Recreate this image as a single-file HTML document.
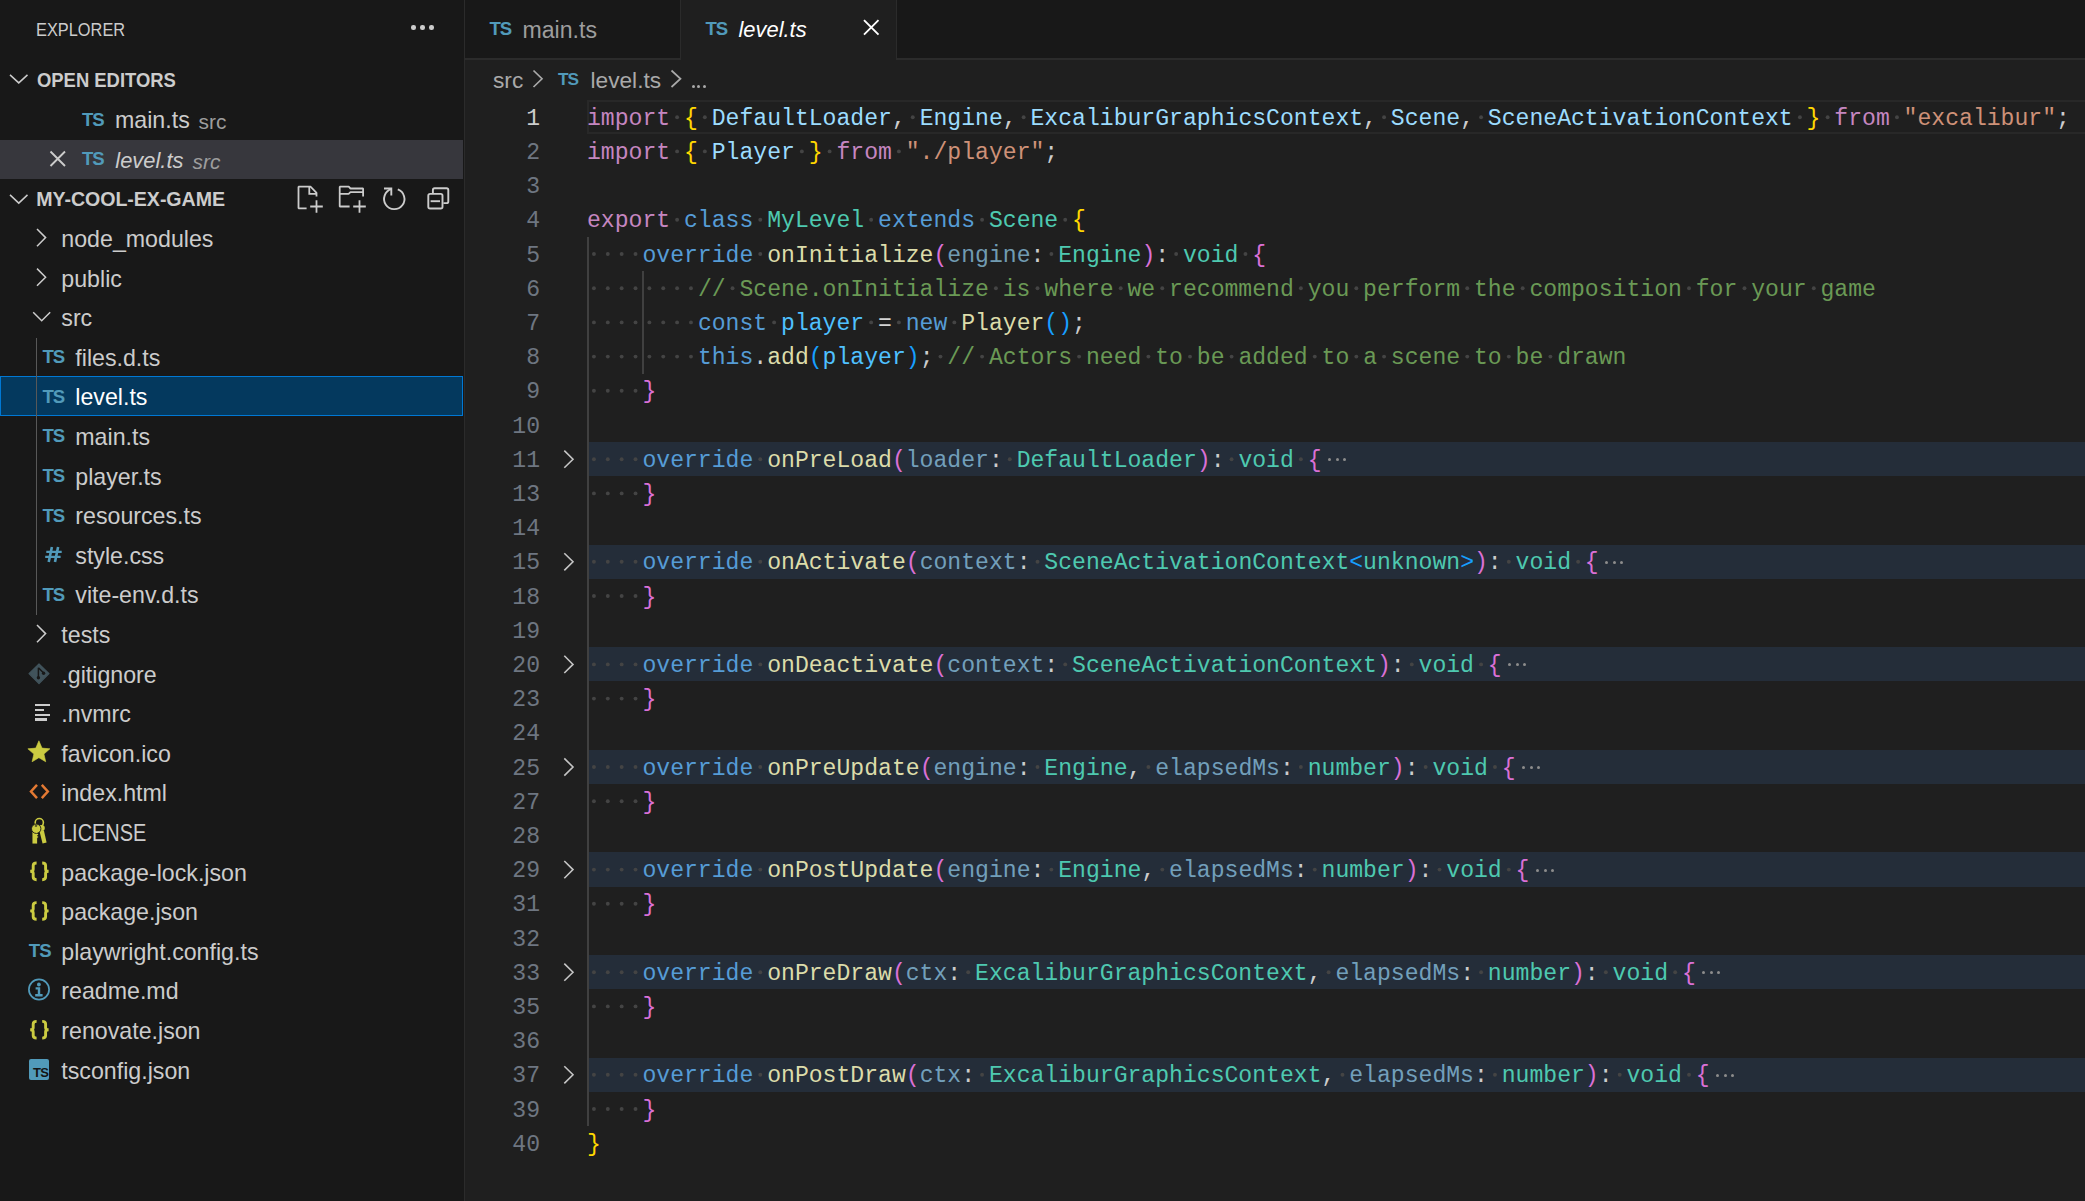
<!DOCTYPE html><html><head><meta charset="utf-8"><style>
html,body{margin:0;padding:0;width:2085px;height:1201px;overflow:hidden;background:#1f1f1f;}
.t{position:absolute;white-space:pre;}
.a{position:absolute;}
svg{position:absolute;overflow:visible;}
.cl{position:absolute;left:587px;height:34.2px;line-height:34.2px;font-family:"Liberation Mono",monospace;font-size:23.1px;white-space:pre;}
.w{color:transparent;}
</style></head><body>
<div class="a" style="left:0;top:0;width:464px;height:1201px;background:#181818;"></div>
<div class="a" style="left:464px;top:0;width:1px;height:1201px;background:#2b2b2b;"></div>
<div class="t" style="left:36.20px;top:17.86px;font:normal normal 19.2px 'Liberation Sans', sans-serif;line-height:24.96px;color:#CCCCCC;transform:scaleX(0.853);transform-origin:0 0;">EXPLORER</div>
<div class="a" style="left:411.25px;top:25.25px;width:4.5px;height:4.5px;border-radius:50%;background:#CCCCCC;"></div>
<div class="a" style="left:420.35px;top:25.25px;width:4.5px;height:4.5px;border-radius:50%;background:#CCCCCC;"></div>
<div class="a" style="left:429.35px;top:25.25px;width:4.5px;height:4.5px;border-radius:50%;background:#CCCCCC;"></div>
<svg style="left:0;top:0" width="1" height="1"><polyline points="10,74.9 18.75,82.9 27.5,74.9" fill="none" stroke="#CCCCCC" stroke-width="1.5"/></svg>
<div class="t" style="left:36.60px;top:68.06px;font:normal bold 19.6px 'Liberation Sans', sans-serif;line-height:25.48px;color:#CCCCCC;transform:scaleX(0.94);transform-origin:0 0;">OPEN EDITORS</div>
<div class="a" style="left:0;top:139.9px;width:463px;height:39.6px;background:#37373D;"></div>
<div class="t" style="left:82.00px;top:107.56px;font:normal bold 18.6px 'Liberation Sans', sans-serif;line-height:24.18px;color:#519ABA;letter-spacing:-1.0px;">TS</div>
<div class="t" style="left:115.00px;top:105.38px;font:normal normal 23.2px 'Liberation Sans', sans-serif;line-height:30.16px;color:#CCCCCC;">main.ts</div>
<div class="t" style="left:198.50px;top:107.67px;font:normal normal 20.9px 'Liberation Sans', sans-serif;line-height:27.17px;color:#9D9D9D;">src</div>
<svg style="left:0;top:0" width="1" height="1"><path d="M50.5 151.5 L65 166 M65 151.5 L50.5 166" stroke="#CCCCCC" stroke-width="1.9" fill="none"/></svg>
<div class="t" style="left:82.00px;top:147.16px;font:normal bold 18.6px 'Liberation Sans', sans-serif;line-height:24.18px;color:#519ABA;letter-spacing:-1.0px;">TS</div>
<div class="t" style="left:115.30px;top:147.07px;font:italic normal 21.9px 'Liberation Sans', sans-serif;line-height:28.47px;color:#CCCCCC;">level.ts</div>
<div class="t" style="left:192.50px;top:148.07px;font:italic normal 20.9px 'Liberation Sans', sans-serif;line-height:27.17px;color:#9D9D9D;">src</div>
<svg style="left:0;top:0" width="1" height="1"><polyline points="10,194.9 18.75,203.1 27.5,194.9" fill="none" stroke="#CCCCCC" stroke-width="1.5"/></svg>
<div class="t" style="left:36.20px;top:186.66px;font:normal bold 19.6px 'Liberation Sans', sans-serif;line-height:25.48px;color:#CCCCCC;letter-spacing:-0.04px;">MY-COOL-EX-GAME</div>
<svg style="left:294.1px;top:183.9px" width="28.8" height="28.8" viewBox="0 0 16 16"><path d="M9.5 1.1l3.4 3.5.1.4v2h-1V6H8V2H3v11h4v1H2.5l-.5-.5v-12l.5-.5h6.7l.3.1zM9 2v3h2.9L9 2zm4 14h-1v-3H9v-1h3V9h1v3h3v1h-3v3z" fill="#CCCCCC" fill-rule="evenodd"/></svg>
<svg style="left:336.8px;top:183.9px" width="28.8" height="28.8" viewBox="0 0 16 16"><path d="M14.5 2H7.71l-.85-.85L6.51 1h-5l-.5.5v11l.5.5H7v-1H1.99V6h4.49l.35-.15.86-.86H14v1.5l-.001.51h1.011V2.5L14.5 2zm-.51 2h-6.5l-.35.15-.86.86H2v-3h4.29l.85.85.36.15H14l-.01.99zM13 16h-1v-3H9v-1h3V9h1v3h3v1h-3v3z" fill="#CCCCCC" fill-rule="evenodd"/></svg>
<svg style="left:0;top:0" width="1" height="1"><path d="M391.3 189.2 A10.2 10.2 0 1 0 397.8 189.4" fill="none" stroke="#CCCCCC" stroke-width="1.9"/><path d="M384 188.5 L391.3 188.5 L391.3 195.5" fill="none" stroke="#CCCCCC" stroke-width="1.9"/></svg>
<svg style="left:0;top:0" width="1" height="1"><path d="M432.9 193 V190 Q432.9 188.3 434.6 188.3 H446.6 Q448.3 188.3 448.3 190 V201.4 Q448.3 203.1 446.6 203.1 H443.4" fill="none" stroke="#CCCCCC" stroke-width="1.9"/><rect x="428.3" y="193.9" width="14.2" height="14.6" rx="1.8" fill="none" stroke="#CCCCCC" stroke-width="1.9"/><path d="M430.6 201.2 H440" stroke="#CCCCCC" stroke-width="1.9"/></svg>
<div class="a" style="left:0;top:375.90px;width:463px;height:39.80px;background:#04395E;box-sizing:border-box;border:1.3px solid #0078D4;"></div>
<div class="a" style="left:36px;top:337.60px;width:1.1px;height:277.20px;background:#585858;"></div>
<svg style="left:0;top:0" width="1" height="1"><polyline points="37,229.00000000000003 45.6,237.60000000000002 37,246.20000000000002" fill="none" stroke="#CCCCCC" stroke-width="1.5"/></svg>
<div class="t" style="left:61.30px;top:223.93px;font:normal normal 23.2px 'Liberation Sans', sans-serif;line-height:30.16px;color:#CCCCCC;">node_modules</div>
<svg style="left:0;top:0" width="1" height="1"><polyline points="37,268.6 45.6,277.20000000000005 37,285.80000000000007" fill="none" stroke="#CCCCCC" stroke-width="1.5"/></svg>
<div class="t" style="left:61.30px;top:263.53px;font:normal normal 23.2px 'Liberation Sans', sans-serif;line-height:30.16px;color:#CCCCCC;">public</div>
<svg style="left:0;top:0" width="1" height="1"><polyline points="33.2,312.2 41.7,320.7 50.2,312.2" fill="none" stroke="#CCCCCC" stroke-width="1.5"/></svg>
<div class="t" style="left:61.30px;top:303.13px;font:normal normal 23.2px 'Liberation Sans', sans-serif;line-height:30.16px;color:#CCCCCC;">src</div>
<svg style="left:0;top:0" width="1" height="1"><polyline points="37,624.9999999999999 45.6,633.5999999999999 37,642.1999999999999" fill="none" stroke="#CCCCCC" stroke-width="1.5"/></svg>
<div class="t" style="left:61.30px;top:619.93px;font:normal normal 23.2px 'Liberation Sans', sans-serif;line-height:30.16px;color:#CCCCCC;">tests</div>
<div class="t" style="left:42.50px;top:345.26px;font:normal bold 18.6px 'Liberation Sans', sans-serif;line-height:24.18px;color:#519ABA;letter-spacing:-1.0px;">TS</div>
<div class="t" style="left:75.30px;top:342.73px;font:normal normal 23.2px 'Liberation Sans', sans-serif;line-height:30.16px;color:#CCCCCC;">files.d.ts</div>
<div class="t" style="left:42.50px;top:384.86px;font:normal bold 18.6px 'Liberation Sans', sans-serif;line-height:24.18px;color:#519ABA;letter-spacing:-1.0px;">TS</div>
<div class="t" style="left:75.30px;top:382.33px;font:normal normal 23.2px 'Liberation Sans', sans-serif;line-height:30.16px;color:#FFFFFF;">level.ts</div>
<div class="t" style="left:42.50px;top:424.46px;font:normal bold 18.6px 'Liberation Sans', sans-serif;line-height:24.18px;color:#519ABA;letter-spacing:-1.0px;">TS</div>
<div class="t" style="left:75.30px;top:421.93px;font:normal normal 23.2px 'Liberation Sans', sans-serif;line-height:30.16px;color:#CCCCCC;">main.ts</div>
<div class="t" style="left:42.50px;top:464.06px;font:normal bold 18.6px 'Liberation Sans', sans-serif;line-height:24.18px;color:#519ABA;letter-spacing:-1.0px;">TS</div>
<div class="t" style="left:75.30px;top:461.53px;font:normal normal 23.2px 'Liberation Sans', sans-serif;line-height:30.16px;color:#CCCCCC;">player.ts</div>
<div class="t" style="left:42.50px;top:503.66px;font:normal bold 18.6px 'Liberation Sans', sans-serif;line-height:24.18px;color:#519ABA;letter-spacing:-1.0px;">TS</div>
<div class="t" style="left:75.30px;top:501.13px;font:normal normal 23.2px 'Liberation Sans', sans-serif;line-height:30.16px;color:#CCCCCC;">resources.ts</div>
<svg style="left:0;top:0" width="1" height="1"><path d="M51.9 546.9 L48.7 562.1 M58.1 546.9 L55 562.1" stroke="#519ABA" stroke-width="2.6" fill="none"/><path d="M46.3 551.9 H61.7 M45.2 556.9 H60.6" stroke="#519ABA" stroke-width="2.1" fill="none"/></svg>
<div class="t" style="left:75.30px;top:540.73px;font:normal normal 23.2px 'Liberation Sans', sans-serif;line-height:30.16px;color:#CCCCCC;">style.css</div>
<div class="t" style="left:42.50px;top:582.86px;font:normal bold 18.6px 'Liberation Sans', sans-serif;line-height:24.18px;color:#519ABA;letter-spacing:-1.0px;">TS</div>
<div class="t" style="left:75.30px;top:580.33px;font:normal normal 23.2px 'Liberation Sans', sans-serif;line-height:30.16px;color:#CCCCCC;">vite-env.d.ts</div>
<div class="t" style="left:61.30px;top:659.53px;font:normal normal 23.2px 'Liberation Sans', sans-serif;line-height:30.16px;color:#CCCCCC;">.gitignore</div>
<svg style="left:0;top:0" width="1" height="1"><path d="M39 664.0 L49 673.6 L39 683.6 L29 673.6 Z" fill="#41535B" stroke="#41535B" stroke-width="1.2" stroke-linejoin="round"/><path d="M38.4 667.7 L38.4 677.8000000000001 M38.4 667.7 L43.6 673.0" stroke="#181818" stroke-width="1.5" fill="none"/><circle cx="38.4" cy="677.8000000000001" r="1.7" fill="#181818"/><circle cx="43.6" cy="673.2" r="1.7" fill="#181818"/></svg>
<div class="t" style="left:61.30px;top:699.13px;font:normal normal 23.2px 'Liberation Sans', sans-serif;line-height:30.16px;color:#CCCCCC;">.nvmrc</div>
<div class="a" style="left:35px;top:704.20px;width:14.9px;height:2.3px;background:#CCCCCC;"></div>
<div class="a" style="left:35px;top:708.90px;width:8.6px;height:2.3px;background:#CCCCCC;"></div>
<div class="a" style="left:35px;top:713.60px;width:14.9px;height:2.3px;background:#CCCCCC;"></div>
<div class="a" style="left:35px;top:718.30px;width:11.5px;height:2.3px;background:#CCCCCC;"></div>
<div class="t" style="left:61.30px;top:738.73px;font:normal normal 23.2px 'Liberation Sans', sans-serif;line-height:30.16px;color:#CCCCCC;">favicon.ico</div>
<svg style="left:0;top:0" width="1" height="1"><polygon points="38.90,740.80 42.02,748.11 49.93,748.82 43.94,754.04 45.72,761.78 38.90,757.70 32.08,761.78 33.86,754.04 27.87,748.82 35.78,748.11" fill="#CBCB41" stroke="#CBCB41" stroke-width="0.6" stroke-linejoin="round"/></svg>
<div class="t" style="left:61.30px;top:778.33px;font:normal normal 23.2px 'Liberation Sans', sans-serif;line-height:30.16px;color:#CCCCCC;">index.html</div>
<svg style="left:0;top:0" width="1" height="1"><path d="M37 784.8 L31 791.5 L37 798.2 M41.8 784.8 L47.8 791.5 L41.8 798.2" stroke="#E37933" stroke-width="2.5" fill="none"/></svg>
<div class="t" style="left:61.30px;top:817.93px;font:normal normal 23.2px 'Liberation Sans', sans-serif;line-height:30.16px;color:#CCCCCC;transform:scaleX(0.86);transform-origin:0 0;">LICENSE</div>
<svg style="left:0;top:0" width="1" height="1"><circle cx="39.3" cy="822.5999999999999" r="4.1" stroke="#CBCB41" stroke-width="1.6" fill="none"/><path d="M39.3 830.5999999999999 L43.9 830.5999999999999 L46.6 842.3999999999999 L42.6 843.4999999999999 Z" fill="#CBCB41"/><circle cx="41.8" cy="827.9999999999999" r="3" fill="#CBCB41"/><g stroke="#181818" stroke-width="0.9"><path d="M32 829.0999999999999 L37.6 829.0999999999999 L37.6 833.5999999999999 L38.6 834.5999999999999 L37.6 835.5999999999999 L38.6 837.0999999999999 L37.6 838.0999999999999 L37.6 843.9999999999999 L32 843.9999999999999 Z" fill="#CBCB41"/><circle cx="36.2" cy="828.6999999999999" r="4.7" fill="#CBCB41"/></g><path d="M32.5 829.3999999999999 H37.2 V833.5999999999999" fill="#CBCB41"/><circle cx="36" cy="825.6999999999999" r="1.3" fill="#181818" opacity="0.6"/></svg>
<div class="t" style="left:61.30px;top:857.53px;font:normal normal 23.2px 'Liberation Sans', sans-serif;line-height:30.16px;color:#CCCCCC;">package-lock.json</div>
<svg style="left:0;top:0" width="1" height="1"><path d="M36.6 863.0 Q33.2 863.0 33.2 865.6 V869.3000000000001 Q33.2 871.3000000000001 30.2 871.3000000000001 Q33.2 871.3000000000001 33.2 873.3000000000001 V877.1 Q33.2 879.7 36.6 879.7" stroke="#CBCB41" stroke-width="2.9" fill="none"/><path d="M42.2 863.0 Q45.6 863.0 45.6 865.6 V869.3000000000001 Q45.6 871.3000000000001 48.6 871.3000000000001 Q45.6 871.3000000000001 45.6 873.3000000000001 V877.1 Q45.6 879.7 42.2 879.7" stroke="#CBCB41" stroke-width="2.9" fill="none"/></svg>
<div class="t" style="left:61.30px;top:897.13px;font:normal normal 23.2px 'Liberation Sans', sans-serif;line-height:30.16px;color:#CCCCCC;">package.json</div>
<svg style="left:0;top:0" width="1" height="1"><path d="M36.6 902.5999999999999 Q33.2 902.5999999999999 33.2 905.1999999999999 V908.9 Q33.2 910.9 30.2 910.9 Q33.2 910.9 33.2 912.9 V916.6999999999999 Q33.2 919.3 36.6 919.3" stroke="#CBCB41" stroke-width="2.9" fill="none"/><path d="M42.2 902.5999999999999 Q45.6 902.5999999999999 45.6 905.1999999999999 V908.9 Q45.6 910.9 48.6 910.9 Q45.6 910.9 45.6 912.9 V916.6999999999999 Q45.6 919.3 42.2 919.3" stroke="#CBCB41" stroke-width="2.9" fill="none"/></svg>
<div class="t" style="left:61.30px;top:936.73px;font:normal normal 23.2px 'Liberation Sans', sans-serif;line-height:30.16px;color:#CCCCCC;">playwright.config.ts</div>
<div class="t" style="left:28.80px;top:939.06px;font:normal bold 18.6px 'Liberation Sans', sans-serif;line-height:24.18px;color:#519ABA;letter-spacing:-1.0px;">TS</div>
<div class="t" style="left:61.30px;top:976.33px;font:normal normal 23.2px 'Liberation Sans', sans-serif;line-height:30.16px;color:#CCCCCC;">readme.md</div>
<svg style="left:0;top:0" width="1" height="1"><circle cx="39" cy="989.5" r="10.1" stroke="#519ABA" stroke-width="1.7" fill="none"/><circle cx="38.9" cy="984.5" r="1.9" fill="#519ABA"/><path d="M35.6 988.4 H39 V995.6 M35.2 995.3 H42.6" stroke="#519ABA" stroke-width="2.4" fill="none"/></svg>
<div class="t" style="left:61.30px;top:1015.93px;font:normal normal 23.2px 'Liberation Sans', sans-serif;line-height:30.16px;color:#CCCCCC;">renovate.json</div>
<svg style="left:0;top:0" width="1" height="1"><path d="M36.6 1021.3999999999999 Q33.2 1021.3999999999999 33.2 1023.9999999999999 V1027.6999999999998 Q33.2 1029.6999999999998 30.2 1029.6999999999998 Q33.2 1029.6999999999998 33.2 1031.6999999999998 V1035.5 Q33.2 1038.1 36.6 1038.1" stroke="#CBCB41" stroke-width="2.9" fill="none"/><path d="M42.2 1021.3999999999999 Q45.6 1021.3999999999999 45.6 1023.9999999999999 V1027.6999999999998 Q45.6 1029.6999999999998 48.6 1029.6999999999998 Q45.6 1029.6999999999998 45.6 1031.6999999999998 V1035.5 Q45.6 1038.1 42.2 1038.1" stroke="#CBCB41" stroke-width="2.9" fill="none"/></svg>
<div class="t" style="left:61.30px;top:1055.53px;font:normal normal 23.2px 'Liberation Sans', sans-serif;line-height:30.16px;color:#CCCCCC;">tsconfig.json</div>
<div class="a" style="left:28.8px;top:1059.00px;width:20.2px;height:20.5px;background:#519ABA;border-radius:2px;"></div>
<div class="t" style="left:33.00px;top:1064.54px;font:normal bold 13px 'Liberation Sans', sans-serif;line-height:16.9px;color:#141414;letter-spacing:-0.6px;">TS</div>
<div class="a" style="left:465px;top:0;width:1620px;height:58px;background:#181818;"></div>
<div class="a" style="left:465px;top:58px;width:1620px;height:2px;background:#2b2b2b;"></div>
<div class="a" style="left:680px;top:0;width:1.2px;height:58px;background:#2b2b2b;"></div>
<div class="a" style="left:681.2px;top:0;width:215px;height:60px;background:#1f1f1f;"></div>
<div class="a" style="left:896.2px;top:0;width:1.2px;height:58px;background:#2b2b2b;"></div>
<div class="t" style="left:489.50px;top:16.56px;font:normal bold 18.6px 'Liberation Sans', sans-serif;line-height:24.18px;color:#519ABA;letter-spacing:-1.0px;">TS</div>
<div class="t" style="left:522.50px;top:15.28px;font:normal normal 23.1px 'Liberation Sans', sans-serif;line-height:30.03px;color:#9D9D9D;">main.ts</div>
<div class="t" style="left:705.50px;top:16.56px;font:normal bold 18.6px 'Liberation Sans', sans-serif;line-height:24.18px;color:#519ABA;letter-spacing:-1.0px;">TS</div>
<div class="t" style="left:738.50px;top:16.17px;font:italic normal 21.9px 'Liberation Sans', sans-serif;line-height:28.47px;color:#FFFFFF;">level.ts</div>
<svg style="left:0;top:0" width="1" height="1"><path d="M864 20.2 L878.5 34.7 M878.5 20.2 L864 34.7" stroke="#FFFFFF" stroke-width="1.9" fill="none"/></svg>
<div class="t" style="left:493.00px;top:65.97px;font:normal normal 22.7px 'Liberation Sans', sans-serif;line-height:29.51px;color:#A9A9A9;">src</div>
<svg style="left:0;top:0" width="1" height="1"><polyline points="533.5,70.5 542,78.75 533.5,87" fill="none" stroke="#A9A9A9" stroke-width="1.7"/></svg>
<div class="t" style="left:558.00px;top:68.11px;font:normal bold 17.3px 'Liberation Sans', sans-serif;line-height:22.49px;color:#519ABA;letter-spacing:-1.0px;">TS</div>
<div class="t" style="left:590.50px;top:65.97px;font:normal normal 22.7px 'Liberation Sans', sans-serif;line-height:29.51px;color:#A9A9A9;">level.ts</div>
<svg style="left:0;top:0" width="1" height="1"><polyline points="671.5,70.5 680.5,78.75 671.5,87" fill="none" stroke="#A9A9A9" stroke-width="1.7"/></svg>
<div class="a" style="left:691.50px;top:84.50px;width:3px;height:3px;border-radius:50%;background:#A9A9A9;"></div>
<div class="a" style="left:697.00px;top:84.50px;width:3px;height:3px;border-radius:50%;background:#A9A9A9;"></div>
<div class="a" style="left:702.50px;top:84.50px;width:3px;height:3px;border-radius:50%;background:#A9A9A9;"></div>
<div class="a" style="left:587px;top:100.00px;width:1498px;height:34.2px;box-sizing:border-box;border:2.2px solid #282828;border-right:none;"></div>
<div class="a" style="left:587px;top:442.00px;width:1498px;height:34.2px;background:#242d39;"></div>
<div class="a" style="left:587px;top:544.60px;width:1498px;height:34.2px;background:#242d39;"></div>
<div class="a" style="left:587px;top:647.20px;width:1498px;height:34.2px;background:#242d39;"></div>
<div class="a" style="left:587px;top:749.80px;width:1498px;height:34.2px;background:#242d39;"></div>
<div class="a" style="left:587px;top:852.40px;width:1498px;height:34.2px;background:#242d39;"></div>
<div class="a" style="left:587px;top:955.00px;width:1498px;height:34.2px;background:#242d39;"></div>
<div class="a" style="left:587px;top:1057.60px;width:1498px;height:34.2px;background:#242d39;"></div>
<div class="a" style="left:587px;top:236.80px;width:2px;height:889.20px;background:#404040;"></div>
<div class="a" style="left:641.9px;top:271.00px;width:2px;height:102.60px;background:#404040;"></div>
<svg style="left:0;top:0" width="1" height="1"><g fill="#444444"><circle cx="677.10" cy="117.20" r="1.95"/><circle cx="704.83" cy="117.20" r="1.95"/><circle cx="912.76" cy="117.20" r="1.95"/><circle cx="1023.65" cy="117.20" r="1.95"/><circle cx="1384.07" cy="117.20" r="1.95"/><circle cx="1481.10" cy="117.20" r="1.95"/><circle cx="1799.92" cy="117.20" r="1.95"/><circle cx="1827.65" cy="117.20" r="1.95"/><circle cx="1896.96" cy="117.20" r="1.95"/><circle cx="677.10" cy="151.40" r="1.95"/><circle cx="704.83" cy="151.40" r="1.95"/><circle cx="801.86" cy="151.40" r="1.95"/><circle cx="829.59" cy="151.40" r="1.95"/><circle cx="898.89" cy="151.40" r="1.95"/><circle cx="677.10" cy="219.80" r="1.95"/><circle cx="760.27" cy="219.80" r="1.95"/><circle cx="871.17" cy="219.80" r="1.95"/><circle cx="982.07" cy="219.80" r="1.95"/><circle cx="1065.24" cy="219.80" r="1.95"/><circle cx="593.93" cy="254.00" r="1.95"/><circle cx="607.79" cy="254.00" r="1.95"/><circle cx="621.65" cy="254.00" r="1.95"/><circle cx="635.52" cy="254.00" r="1.95"/><circle cx="760.27" cy="254.00" r="1.95"/><circle cx="1051.38" cy="254.00" r="1.95"/><circle cx="1176.13" cy="254.00" r="1.95"/><circle cx="1245.45" cy="254.00" r="1.95"/><circle cx="593.93" cy="288.20" r="1.95"/><circle cx="607.79" cy="288.20" r="1.95"/><circle cx="621.65" cy="288.20" r="1.95"/><circle cx="635.52" cy="288.20" r="1.95"/><circle cx="649.38" cy="288.20" r="1.95"/><circle cx="663.24" cy="288.20" r="1.95"/><circle cx="677.10" cy="288.20" r="1.95"/><circle cx="690.97" cy="288.20" r="1.95"/><circle cx="732.55" cy="288.20" r="1.95"/><circle cx="995.93" cy="288.20" r="1.95"/><circle cx="1037.51" cy="288.20" r="1.95"/><circle cx="1120.69" cy="288.20" r="1.95"/><circle cx="1162.27" cy="288.20" r="1.95"/><circle cx="1300.89" cy="288.20" r="1.95"/><circle cx="1356.34" cy="288.20" r="1.95"/><circle cx="1467.24" cy="288.20" r="1.95"/><circle cx="1522.68" cy="288.20" r="1.95"/><circle cx="1689.03" cy="288.20" r="1.95"/><circle cx="1744.48" cy="288.20" r="1.95"/><circle cx="1813.79" cy="288.20" r="1.95"/><circle cx="593.93" cy="322.40" r="1.95"/><circle cx="607.79" cy="322.40" r="1.95"/><circle cx="621.65" cy="322.40" r="1.95"/><circle cx="635.52" cy="322.40" r="1.95"/><circle cx="649.38" cy="322.40" r="1.95"/><circle cx="663.24" cy="322.40" r="1.95"/><circle cx="677.10" cy="322.40" r="1.95"/><circle cx="690.97" cy="322.40" r="1.95"/><circle cx="774.14" cy="322.40" r="1.95"/><circle cx="871.17" cy="322.40" r="1.95"/><circle cx="898.89" cy="322.40" r="1.95"/><circle cx="954.34" cy="322.40" r="1.95"/><circle cx="593.93" cy="356.60" r="1.95"/><circle cx="607.79" cy="356.60" r="1.95"/><circle cx="621.65" cy="356.60" r="1.95"/><circle cx="635.52" cy="356.60" r="1.95"/><circle cx="649.38" cy="356.60" r="1.95"/><circle cx="663.24" cy="356.60" r="1.95"/><circle cx="677.10" cy="356.60" r="1.95"/><circle cx="690.97" cy="356.60" r="1.95"/><circle cx="940.48" cy="356.60" r="1.95"/><circle cx="982.07" cy="356.60" r="1.95"/><circle cx="1079.10" cy="356.60" r="1.95"/><circle cx="1148.41" cy="356.60" r="1.95"/><circle cx="1190.00" cy="356.60" r="1.95"/><circle cx="1231.58" cy="356.60" r="1.95"/><circle cx="1314.76" cy="356.60" r="1.95"/><circle cx="1356.34" cy="356.60" r="1.95"/><circle cx="1384.07" cy="356.60" r="1.95"/><circle cx="1467.24" cy="356.60" r="1.95"/><circle cx="1508.82" cy="356.60" r="1.95"/><circle cx="1550.41" cy="356.60" r="1.95"/><circle cx="593.93" cy="390.80" r="1.95"/><circle cx="607.79" cy="390.80" r="1.95"/><circle cx="621.65" cy="390.80" r="1.95"/><circle cx="635.52" cy="390.80" r="1.95"/><circle cx="593.93" cy="459.20" r="1.95"/><circle cx="607.79" cy="459.20" r="1.95"/><circle cx="621.65" cy="459.20" r="1.95"/><circle cx="635.52" cy="459.20" r="1.95"/><circle cx="760.27" cy="459.20" r="1.95"/><circle cx="1009.79" cy="459.20" r="1.95"/><circle cx="1231.58" cy="459.20" r="1.95"/><circle cx="1300.89" cy="459.20" r="1.95"/><circle cx="593.93" cy="493.40" r="1.95"/><circle cx="607.79" cy="493.40" r="1.95"/><circle cx="621.65" cy="493.40" r="1.95"/><circle cx="635.52" cy="493.40" r="1.95"/><circle cx="593.93" cy="561.80" r="1.95"/><circle cx="607.79" cy="561.80" r="1.95"/><circle cx="621.65" cy="561.80" r="1.95"/><circle cx="635.52" cy="561.80" r="1.95"/><circle cx="760.27" cy="561.80" r="1.95"/><circle cx="1037.51" cy="561.80" r="1.95"/><circle cx="1508.82" cy="561.80" r="1.95"/><circle cx="1578.13" cy="561.80" r="1.95"/><circle cx="593.93" cy="596.00" r="1.95"/><circle cx="607.79" cy="596.00" r="1.95"/><circle cx="621.65" cy="596.00" r="1.95"/><circle cx="635.52" cy="596.00" r="1.95"/><circle cx="593.93" cy="664.40" r="1.95"/><circle cx="607.79" cy="664.40" r="1.95"/><circle cx="621.65" cy="664.40" r="1.95"/><circle cx="635.52" cy="664.40" r="1.95"/><circle cx="760.27" cy="664.40" r="1.95"/><circle cx="1065.24" cy="664.40" r="1.95"/><circle cx="1411.79" cy="664.40" r="1.95"/><circle cx="1481.10" cy="664.40" r="1.95"/><circle cx="593.93" cy="698.60" r="1.95"/><circle cx="607.79" cy="698.60" r="1.95"/><circle cx="621.65" cy="698.60" r="1.95"/><circle cx="635.52" cy="698.60" r="1.95"/><circle cx="593.93" cy="767.00" r="1.95"/><circle cx="607.79" cy="767.00" r="1.95"/><circle cx="621.65" cy="767.00" r="1.95"/><circle cx="635.52" cy="767.00" r="1.95"/><circle cx="760.27" cy="767.00" r="1.95"/><circle cx="1037.51" cy="767.00" r="1.95"/><circle cx="1148.41" cy="767.00" r="1.95"/><circle cx="1300.89" cy="767.00" r="1.95"/><circle cx="1425.65" cy="767.00" r="1.95"/><circle cx="1494.96" cy="767.00" r="1.95"/><circle cx="593.93" cy="801.20" r="1.95"/><circle cx="607.79" cy="801.20" r="1.95"/><circle cx="621.65" cy="801.20" r="1.95"/><circle cx="635.52" cy="801.20" r="1.95"/><circle cx="593.93" cy="869.60" r="1.95"/><circle cx="607.79" cy="869.60" r="1.95"/><circle cx="621.65" cy="869.60" r="1.95"/><circle cx="635.52" cy="869.60" r="1.95"/><circle cx="760.27" cy="869.60" r="1.95"/><circle cx="1051.38" cy="869.60" r="1.95"/><circle cx="1162.27" cy="869.60" r="1.95"/><circle cx="1314.76" cy="869.60" r="1.95"/><circle cx="1439.51" cy="869.60" r="1.95"/><circle cx="1508.82" cy="869.60" r="1.95"/><circle cx="593.93" cy="903.80" r="1.95"/><circle cx="607.79" cy="903.80" r="1.95"/><circle cx="621.65" cy="903.80" r="1.95"/><circle cx="635.52" cy="903.80" r="1.95"/><circle cx="593.93" cy="972.20" r="1.95"/><circle cx="607.79" cy="972.20" r="1.95"/><circle cx="621.65" cy="972.20" r="1.95"/><circle cx="635.52" cy="972.20" r="1.95"/><circle cx="760.27" cy="972.20" r="1.95"/><circle cx="968.20" cy="972.20" r="1.95"/><circle cx="1328.62" cy="972.20" r="1.95"/><circle cx="1481.10" cy="972.20" r="1.95"/><circle cx="1605.86" cy="972.20" r="1.95"/><circle cx="1675.17" cy="972.20" r="1.95"/><circle cx="593.93" cy="1006.40" r="1.95"/><circle cx="607.79" cy="1006.40" r="1.95"/><circle cx="621.65" cy="1006.40" r="1.95"/><circle cx="635.52" cy="1006.40" r="1.95"/><circle cx="593.93" cy="1074.80" r="1.95"/><circle cx="607.79" cy="1074.80" r="1.95"/><circle cx="621.65" cy="1074.80" r="1.95"/><circle cx="635.52" cy="1074.80" r="1.95"/><circle cx="760.27" cy="1074.80" r="1.95"/><circle cx="982.07" cy="1074.80" r="1.95"/><circle cx="1342.48" cy="1074.80" r="1.95"/><circle cx="1494.96" cy="1074.80" r="1.95"/><circle cx="1619.72" cy="1074.80" r="1.95"/><circle cx="1689.03" cy="1074.80" r="1.95"/><circle cx="593.93" cy="1109.00" r="1.95"/><circle cx="607.79" cy="1109.00" r="1.95"/><circle cx="621.65" cy="1109.00" r="1.95"/><circle cx="635.52" cy="1109.00" r="1.95"/></g></svg>
<div class="cl" style="left:480px;width:60px;text-align:right;top:101.75px;color:#CCCCCC">1</div>
<div class="cl" style="top:101.75px"><span style="color:#C586C0">import</span><span class="w">·</span><span style="color:#FFD700">{</span><span class="w">·</span><span style="color:#9CDCFE">DefaultLoader</span><span style="color:#CCCCCC">,</span><span class="w">·</span><span style="color:#9CDCFE">Engine</span><span style="color:#CCCCCC">,</span><span class="w">·</span><span style="color:#9CDCFE">ExcaliburGraphicsContext</span><span style="color:#CCCCCC">,</span><span class="w">·</span><span style="color:#9CDCFE">Scene</span><span style="color:#CCCCCC">,</span><span class="w">·</span><span style="color:#9CDCFE">SceneActivationContext</span><span class="w">·</span><span style="color:#FFD700">}</span><span class="w">·</span><span style="color:#C586C0">from</span><span class="w">·</span><span style="color:#CE9178">"excalibur"</span><span style="color:#CCCCCC">;</span></div>
<div class="cl" style="left:480px;width:60px;text-align:right;top:135.95px;color:#6E7681">2</div>
<div class="cl" style="top:135.95px"><span style="color:#C586C0">import</span><span class="w">·</span><span style="color:#FFD700">{</span><span class="w">·</span><span style="color:#9CDCFE">Player</span><span class="w">·</span><span style="color:#FFD700">}</span><span class="w">·</span><span style="color:#C586C0">from</span><span class="w">·</span><span style="color:#CE9178">"./player"</span><span style="color:#CCCCCC">;</span></div>
<div class="cl" style="left:480px;width:60px;text-align:right;top:170.15px;color:#6E7681">3</div>
<div class="cl" style="top:170.15px"></div>
<div class="cl" style="left:480px;width:60px;text-align:right;top:204.35px;color:#6E7681">4</div>
<div class="cl" style="top:204.35px"><span style="color:#C586C0">export</span><span class="w">·</span><span style="color:#569CD6">class</span><span class="w">·</span><span style="color:#4EC9B0">MyLevel</span><span class="w">·</span><span style="color:#569CD6">extends</span><span class="w">·</span><span style="color:#4EC9B0">Scene</span><span class="w">·</span><span style="color:#FFD700">{</span></div>
<div class="cl" style="left:480px;width:60px;text-align:right;top:238.55px;color:#6E7681">5</div>
<div class="cl" style="top:238.55px"><span class="w">·</span><span class="w">·</span><span class="w">·</span><span class="w">·</span><span style="color:#569CD6">override</span><span class="w">·</span><span style="color:#DCDCAA">onInitialize</span><span style="color:#DA70D6">(</span><span style="color:rgba(156,220,254,0.67)">engine</span><span style="color:#CCCCCC">:</span><span class="w">·</span><span style="color:#4EC9B0">Engine</span><span style="color:#DA70D6">)</span><span style="color:#CCCCCC">:</span><span class="w">·</span><span style="color:#4EC9B0">void</span><span class="w">·</span><span style="color:#DA70D6">{</span></div>
<div class="cl" style="left:480px;width:60px;text-align:right;top:272.75px;color:#6E7681">6</div>
<div class="cl" style="top:272.75px"><span class="w">·</span><span class="w">·</span><span class="w">·</span><span class="w">·</span><span class="w">·</span><span class="w">·</span><span class="w">·</span><span class="w">·</span><span style="color:#6A9955">//</span><span class="w">·</span><span style="color:#6A9955">Scene.onInitialize</span><span class="w">·</span><span style="color:#6A9955">is</span><span class="w">·</span><span style="color:#6A9955">where</span><span class="w">·</span><span style="color:#6A9955">we</span><span class="w">·</span><span style="color:#6A9955">recommend</span><span class="w">·</span><span style="color:#6A9955">you</span><span class="w">·</span><span style="color:#6A9955">perform</span><span class="w">·</span><span style="color:#6A9955">the</span><span class="w">·</span><span style="color:#6A9955">composition</span><span class="w">·</span><span style="color:#6A9955">for</span><span class="w">·</span><span style="color:#6A9955">your</span><span class="w">·</span><span style="color:#6A9955">game</span></div>
<div class="cl" style="left:480px;width:60px;text-align:right;top:306.95px;color:#6E7681">7</div>
<div class="cl" style="top:306.95px"><span class="w">·</span><span class="w">·</span><span class="w">·</span><span class="w">·</span><span class="w">·</span><span class="w">·</span><span class="w">·</span><span class="w">·</span><span style="color:#569CD6">const</span><span class="w">·</span><span style="color:#4FC1FF">player</span><span class="w">·</span><span style="color:#D4D4D4">=</span><span class="w">·</span><span style="color:#569CD6">new</span><span class="w">·</span><span style="color:#DCDCAA">Player</span><span style="color:#179FFF">()</span><span style="color:#CCCCCC">;</span></div>
<div class="cl" style="left:480px;width:60px;text-align:right;top:341.15px;color:#6E7681">8</div>
<div class="cl" style="top:341.15px"><span class="w">·</span><span class="w">·</span><span class="w">·</span><span class="w">·</span><span class="w">·</span><span class="w">·</span><span class="w">·</span><span class="w">·</span><span style="color:#569CD6">this</span><span style="color:#CCCCCC">.</span><span style="color:#DCDCAA">add</span><span style="color:#179FFF">(</span><span style="color:#4FC1FF">player</span><span style="color:#179FFF">)</span><span style="color:#CCCCCC">;</span><span class="w">·</span><span style="color:#6A9955">//</span><span class="w">·</span><span style="color:#6A9955">Actors</span><span class="w">·</span><span style="color:#6A9955">need</span><span class="w">·</span><span style="color:#6A9955">to</span><span class="w">·</span><span style="color:#6A9955">be</span><span class="w">·</span><span style="color:#6A9955">added</span><span class="w">·</span><span style="color:#6A9955">to</span><span class="w">·</span><span style="color:#6A9955">a</span><span class="w">·</span><span style="color:#6A9955">scene</span><span class="w">·</span><span style="color:#6A9955">to</span><span class="w">·</span><span style="color:#6A9955">be</span><span class="w">·</span><span style="color:#6A9955">drawn</span></div>
<div class="cl" style="left:480px;width:60px;text-align:right;top:375.35px;color:#6E7681">9</div>
<div class="cl" style="top:375.35px"><span class="w">·</span><span class="w">·</span><span class="w">·</span><span class="w">·</span><span style="color:#DA70D6">}</span></div>
<div class="cl" style="left:480px;width:60px;text-align:right;top:409.55px;color:#6E7681">10</div>
<div class="cl" style="top:409.55px"></div>
<div class="cl" style="left:480px;width:60px;text-align:right;top:443.75px;color:#6E7681">11</div>
<svg style="left:0;top:0" width="1" height="1"><polyline points="564.3,450.6 573,459.20000000000005 564.3,467.8" fill="none" stroke="#C5C5C5" stroke-width="1.6"/></svg>
<div class="a" style="left:1328.09px;top:458.20px;width:3.1px;height:3.1px;border-radius:50%;background:#8c8c8c;"></div>
<div class="a" style="left:1335.59px;top:458.20px;width:3.1px;height:3.1px;border-radius:50%;background:#8c8c8c;"></div>
<div class="a" style="left:1343.09px;top:458.20px;width:3.1px;height:3.1px;border-radius:50%;background:#8c8c8c;"></div>
<div class="cl" style="top:443.75px"><span class="w">·</span><span class="w">·</span><span class="w">·</span><span class="w">·</span><span style="color:#569CD6">override</span><span class="w">·</span><span style="color:#DCDCAA">onPreLoad</span><span style="color:#DA70D6">(</span><span style="color:rgba(156,220,254,0.67)">loader</span><span style="color:#CCCCCC">:</span><span class="w">·</span><span style="color:#4EC9B0">DefaultLoader</span><span style="color:#DA70D6">)</span><span style="color:#CCCCCC">:</span><span class="w">·</span><span style="color:#4EC9B0">void</span><span class="w">·</span><span style="color:#DA70D6">{</span></div>
<div class="cl" style="left:480px;width:60px;text-align:right;top:477.95px;color:#6E7681">13</div>
<div class="cl" style="top:477.95px"><span class="w">·</span><span class="w">·</span><span class="w">·</span><span class="w">·</span><span style="color:#DA70D6">}</span></div>
<div class="cl" style="left:480px;width:60px;text-align:right;top:512.15px;color:#6E7681">14</div>
<div class="cl" style="top:512.15px"></div>
<div class="cl" style="left:480px;width:60px;text-align:right;top:546.35px;color:#6E7681">15</div>
<svg style="left:0;top:0" width="1" height="1"><polyline points="564.3,553.2 573,561.8 564.3,570.4" fill="none" stroke="#C5C5C5" stroke-width="1.6"/></svg>
<div class="a" style="left:1605.33px;top:560.80px;width:3.1px;height:3.1px;border-radius:50%;background:#8c8c8c;"></div>
<div class="a" style="left:1612.83px;top:560.80px;width:3.1px;height:3.1px;border-radius:50%;background:#8c8c8c;"></div>
<div class="a" style="left:1620.33px;top:560.80px;width:3.1px;height:3.1px;border-radius:50%;background:#8c8c8c;"></div>
<div class="cl" style="top:546.35px"><span class="w">·</span><span class="w">·</span><span class="w">·</span><span class="w">·</span><span style="color:#569CD6">override</span><span class="w">·</span><span style="color:#DCDCAA">onActivate</span><span style="color:#DA70D6">(</span><span style="color:rgba(156,220,254,0.67)">context</span><span style="color:#CCCCCC">:</span><span class="w">·</span><span style="color:#4EC9B0">SceneActivationContext</span><span style="color:#179FFF">&lt;</span><span style="color:#4EC9B0">unknown</span><span style="color:#179FFF">&gt;</span><span style="color:#DA70D6">)</span><span style="color:#CCCCCC">:</span><span class="w">·</span><span style="color:#4EC9B0">void</span><span class="w">·</span><span style="color:#DA70D6">{</span></div>
<div class="cl" style="left:480px;width:60px;text-align:right;top:580.55px;color:#6E7681">18</div>
<div class="cl" style="top:580.55px"><span class="w">·</span><span class="w">·</span><span class="w">·</span><span class="w">·</span><span style="color:#DA70D6">}</span></div>
<div class="cl" style="left:480px;width:60px;text-align:right;top:614.75px;color:#6E7681">19</div>
<div class="cl" style="top:614.75px"></div>
<div class="cl" style="left:480px;width:60px;text-align:right;top:648.95px;color:#6E7681">20</div>
<svg style="left:0;top:0" width="1" height="1"><polyline points="564.3,655.8000000000001 573,664.4000000000001 564.3,673.0" fill="none" stroke="#C5C5C5" stroke-width="1.6"/></svg>
<div class="a" style="left:1508.29px;top:663.40px;width:3.1px;height:3.1px;border-radius:50%;background:#8c8c8c;"></div>
<div class="a" style="left:1515.79px;top:663.40px;width:3.1px;height:3.1px;border-radius:50%;background:#8c8c8c;"></div>
<div class="a" style="left:1523.29px;top:663.40px;width:3.1px;height:3.1px;border-radius:50%;background:#8c8c8c;"></div>
<div class="cl" style="top:648.95px"><span class="w">·</span><span class="w">·</span><span class="w">·</span><span class="w">·</span><span style="color:#569CD6">override</span><span class="w">·</span><span style="color:#DCDCAA">onDeactivate</span><span style="color:#DA70D6">(</span><span style="color:rgba(156,220,254,0.67)">context</span><span style="color:#CCCCCC">:</span><span class="w">·</span><span style="color:#4EC9B0">SceneActivationContext</span><span style="color:#DA70D6">)</span><span style="color:#CCCCCC">:</span><span class="w">·</span><span style="color:#4EC9B0">void</span><span class="w">·</span><span style="color:#DA70D6">{</span></div>
<div class="cl" style="left:480px;width:60px;text-align:right;top:683.15px;color:#6E7681">23</div>
<div class="cl" style="top:683.15px"><span class="w">·</span><span class="w">·</span><span class="w">·</span><span class="w">·</span><span style="color:#DA70D6">}</span></div>
<div class="cl" style="left:480px;width:60px;text-align:right;top:717.35px;color:#6E7681">24</div>
<div class="cl" style="top:717.35px"></div>
<div class="cl" style="left:480px;width:60px;text-align:right;top:751.55px;color:#6E7681">25</div>
<svg style="left:0;top:0" width="1" height="1"><polyline points="564.3,758.4000000000001 573,767.0 564.3,775.6" fill="none" stroke="#C5C5C5" stroke-width="1.6"/></svg>
<div class="a" style="left:1522.15px;top:766.00px;width:3.1px;height:3.1px;border-radius:50%;background:#8c8c8c;"></div>
<div class="a" style="left:1529.65px;top:766.00px;width:3.1px;height:3.1px;border-radius:50%;background:#8c8c8c;"></div>
<div class="a" style="left:1537.15px;top:766.00px;width:3.1px;height:3.1px;border-radius:50%;background:#8c8c8c;"></div>
<div class="cl" style="top:751.55px"><span class="w">·</span><span class="w">·</span><span class="w">·</span><span class="w">·</span><span style="color:#569CD6">override</span><span class="w">·</span><span style="color:#DCDCAA">onPreUpdate</span><span style="color:#DA70D6">(</span><span style="color:rgba(156,220,254,0.67)">engine</span><span style="color:#CCCCCC">:</span><span class="w">·</span><span style="color:#4EC9B0">Engine</span><span style="color:#CCCCCC">,</span><span class="w">·</span><span style="color:rgba(156,220,254,0.67)">elapsedMs</span><span style="color:#CCCCCC">:</span><span class="w">·</span><span style="color:#4EC9B0">number</span><span style="color:#DA70D6">)</span><span style="color:#CCCCCC">:</span><span class="w">·</span><span style="color:#4EC9B0">void</span><span class="w">·</span><span style="color:#DA70D6">{</span></div>
<div class="cl" style="left:480px;width:60px;text-align:right;top:785.75px;color:#6E7681">27</div>
<div class="cl" style="top:785.75px"><span class="w">·</span><span class="w">·</span><span class="w">·</span><span class="w">·</span><span style="color:#DA70D6">}</span></div>
<div class="cl" style="left:480px;width:60px;text-align:right;top:819.95px;color:#6E7681">28</div>
<div class="cl" style="top:819.95px"></div>
<div class="cl" style="left:480px;width:60px;text-align:right;top:854.15px;color:#6E7681">29</div>
<svg style="left:0;top:0" width="1" height="1"><polyline points="564.3,861.0000000000001 573,869.6000000000001 564.3,878.2" fill="none" stroke="#C5C5C5" stroke-width="1.6"/></svg>
<div class="a" style="left:1536.02px;top:868.60px;width:3.1px;height:3.1px;border-radius:50%;background:#8c8c8c;"></div>
<div class="a" style="left:1543.52px;top:868.60px;width:3.1px;height:3.1px;border-radius:50%;background:#8c8c8c;"></div>
<div class="a" style="left:1551.02px;top:868.60px;width:3.1px;height:3.1px;border-radius:50%;background:#8c8c8c;"></div>
<div class="cl" style="top:854.15px"><span class="w">·</span><span class="w">·</span><span class="w">·</span><span class="w">·</span><span style="color:#569CD6">override</span><span class="w">·</span><span style="color:#DCDCAA">onPostUpdate</span><span style="color:#DA70D6">(</span><span style="color:rgba(156,220,254,0.67)">engine</span><span style="color:#CCCCCC">:</span><span class="w">·</span><span style="color:#4EC9B0">Engine</span><span style="color:#CCCCCC">,</span><span class="w">·</span><span style="color:rgba(156,220,254,0.67)">elapsedMs</span><span style="color:#CCCCCC">:</span><span class="w">·</span><span style="color:#4EC9B0">number</span><span style="color:#DA70D6">)</span><span style="color:#CCCCCC">:</span><span class="w">·</span><span style="color:#4EC9B0">void</span><span class="w">·</span><span style="color:#DA70D6">{</span></div>
<div class="cl" style="left:480px;width:60px;text-align:right;top:888.35px;color:#6E7681">31</div>
<div class="cl" style="top:888.35px"><span class="w">·</span><span class="w">·</span><span class="w">·</span><span class="w">·</span><span style="color:#DA70D6">}</span></div>
<div class="cl" style="left:480px;width:60px;text-align:right;top:922.55px;color:#6E7681">32</div>
<div class="cl" style="top:922.55px"></div>
<div class="cl" style="left:480px;width:60px;text-align:right;top:956.75px;color:#6E7681">33</div>
<svg style="left:0;top:0" width="1" height="1"><polyline points="564.3,963.6000000000001 573,972.2 564.3,980.8000000000001" fill="none" stroke="#C5C5C5" stroke-width="1.6"/></svg>
<div class="a" style="left:1702.36px;top:971.20px;width:3.1px;height:3.1px;border-radius:50%;background:#8c8c8c;"></div>
<div class="a" style="left:1709.86px;top:971.20px;width:3.1px;height:3.1px;border-radius:50%;background:#8c8c8c;"></div>
<div class="a" style="left:1717.36px;top:971.20px;width:3.1px;height:3.1px;border-radius:50%;background:#8c8c8c;"></div>
<div class="cl" style="top:956.75px"><span class="w">·</span><span class="w">·</span><span class="w">·</span><span class="w">·</span><span style="color:#569CD6">override</span><span class="w">·</span><span style="color:#DCDCAA">onPreDraw</span><span style="color:#DA70D6">(</span><span style="color:rgba(156,220,254,0.67)">ctx</span><span style="color:#CCCCCC">:</span><span class="w">·</span><span style="color:#4EC9B0">ExcaliburGraphicsContext</span><span style="color:#CCCCCC">,</span><span class="w">·</span><span style="color:rgba(156,220,254,0.67)">elapsedMs</span><span style="color:#CCCCCC">:</span><span class="w">·</span><span style="color:#4EC9B0">number</span><span style="color:#DA70D6">)</span><span style="color:#CCCCCC">:</span><span class="w">·</span><span style="color:#4EC9B0">void</span><span class="w">·</span><span style="color:#DA70D6">{</span></div>
<div class="cl" style="left:480px;width:60px;text-align:right;top:990.95px;color:#6E7681">35</div>
<div class="cl" style="top:990.95px"><span class="w">·</span><span class="w">·</span><span class="w">·</span><span class="w">·</span><span style="color:#DA70D6">}</span></div>
<div class="cl" style="left:480px;width:60px;text-align:right;top:1025.15px;color:#6E7681">36</div>
<div class="cl" style="top:1025.15px"></div>
<div class="cl" style="left:480px;width:60px;text-align:right;top:1059.35px;color:#6E7681">37</div>
<svg style="left:0;top:0" width="1" height="1"><polyline points="564.3,1066.2 573,1074.8000000000002 564.3,1083.4" fill="none" stroke="#C5C5C5" stroke-width="1.6"/></svg>
<div class="a" style="left:1716.22px;top:1073.80px;width:3.1px;height:3.1px;border-radius:50%;background:#8c8c8c;"></div>
<div class="a" style="left:1723.72px;top:1073.80px;width:3.1px;height:3.1px;border-radius:50%;background:#8c8c8c;"></div>
<div class="a" style="left:1731.22px;top:1073.80px;width:3.1px;height:3.1px;border-radius:50%;background:#8c8c8c;"></div>
<div class="cl" style="top:1059.35px"><span class="w">·</span><span class="w">·</span><span class="w">·</span><span class="w">·</span><span style="color:#569CD6">override</span><span class="w">·</span><span style="color:#DCDCAA">onPostDraw</span><span style="color:#DA70D6">(</span><span style="color:rgba(156,220,254,0.67)">ctx</span><span style="color:#CCCCCC">:</span><span class="w">·</span><span style="color:#4EC9B0">ExcaliburGraphicsContext</span><span style="color:#CCCCCC">,</span><span class="w">·</span><span style="color:rgba(156,220,254,0.67)">elapsedMs</span><span style="color:#CCCCCC">:</span><span class="w">·</span><span style="color:#4EC9B0">number</span><span style="color:#DA70D6">)</span><span style="color:#CCCCCC">:</span><span class="w">·</span><span style="color:#4EC9B0">void</span><span class="w">·</span><span style="color:#DA70D6">{</span></div>
<div class="cl" style="left:480px;width:60px;text-align:right;top:1093.55px;color:#6E7681">39</div>
<div class="cl" style="top:1093.55px"><span class="w">·</span><span class="w">·</span><span class="w">·</span><span class="w">·</span><span style="color:#DA70D6">}</span></div>
<div class="cl" style="left:480px;width:60px;text-align:right;top:1127.75px;color:#6E7681">40</div>
<div class="cl" style="top:1127.75px"><span style="color:#FFD700">}</span></div>
</body></html>
